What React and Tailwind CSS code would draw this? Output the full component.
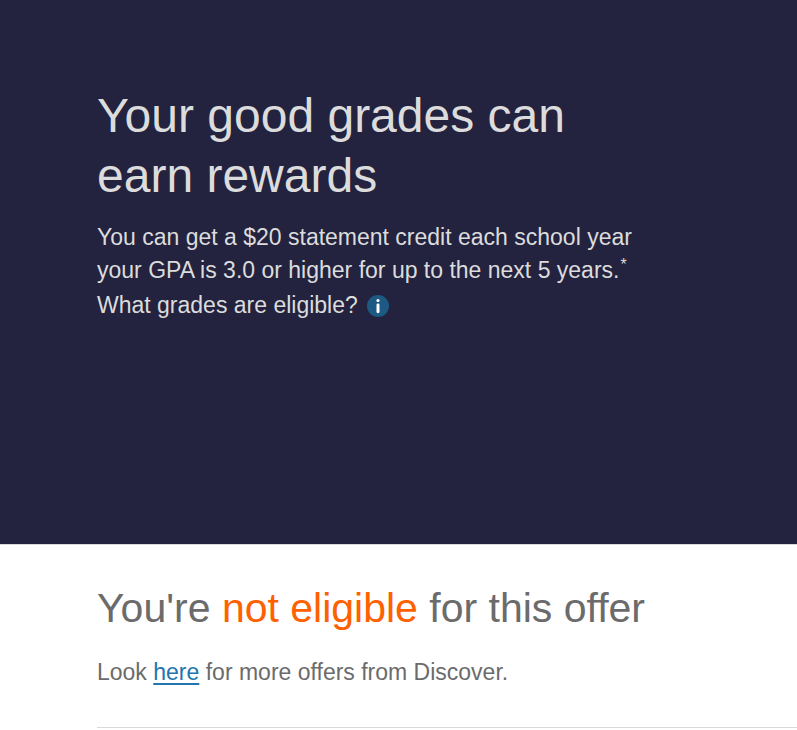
function InfoIcon() {
  return (
    <svg viewBox="0 0 24 24" className="h-6 w-6" aria-hidden="true">
      <circle cx="12" cy="12" r="11" fill="#1c5a84" />
      <circle cx="12" cy="6.5" r="1.6" fill="#fff" />
      <rect x="10.5" y="9.6" width="3" height="9.6" rx="1.4" fill="#fff" />
    </svg>
  );
}

export default function App() {
  return (
    <main className="min-h-screen bg-white font-['Liberation_Sans',Arial,sans-serif]">
      <section className="border-b border-[#d9d9dc] bg-[#23233f] px-[97px] pt-[86px] pb-[222px] text-[#dcdcdc]">
        <div className="max-w-[560px]">
          <h1 className="max-w-[500px] text-5xl leading-[60px]">Your good grades can earn rewards</h1>
          <p className="mt-[15px] text-[23px] leading-[33px]">
            You can get a $20 statement credit each school year your GPA is 3.0 or higher for up to the next 5
            years.<sup className="ml-px text-base leading-none">*</sup>
          </p>
          <div className="mt-0.5 flex items-center gap-2 text-[23px] leading-[33px]">
            <span>What grades are eligible?</span>
            <button type="button" aria-label="What grades are eligible?">
              <InfoIcon />
            </button>
          </div>
        </div>
      </section>

      <section className="pt-[35px] pl-[97px]">
        <h2 className="text-[41px] leading-[56px] text-[#6b6b6b]">
          You're <span className="text-[#ff6000]">not eligible</span> for this offer
        </h2>
        <p className="mt-5 text-[23px] leading-8 text-[#6b6b6b]">
          Look{' '}
          <a href="#offers" className="text-[#2275ad] underline decoration-2 underline-offset-3">
            here
          </a>{' '}
          for more offers from Discover.
        </p>
        <hr className="mt-[39px] border-[#d9d9dc]" />
      </section>
    </main>
  );
}
